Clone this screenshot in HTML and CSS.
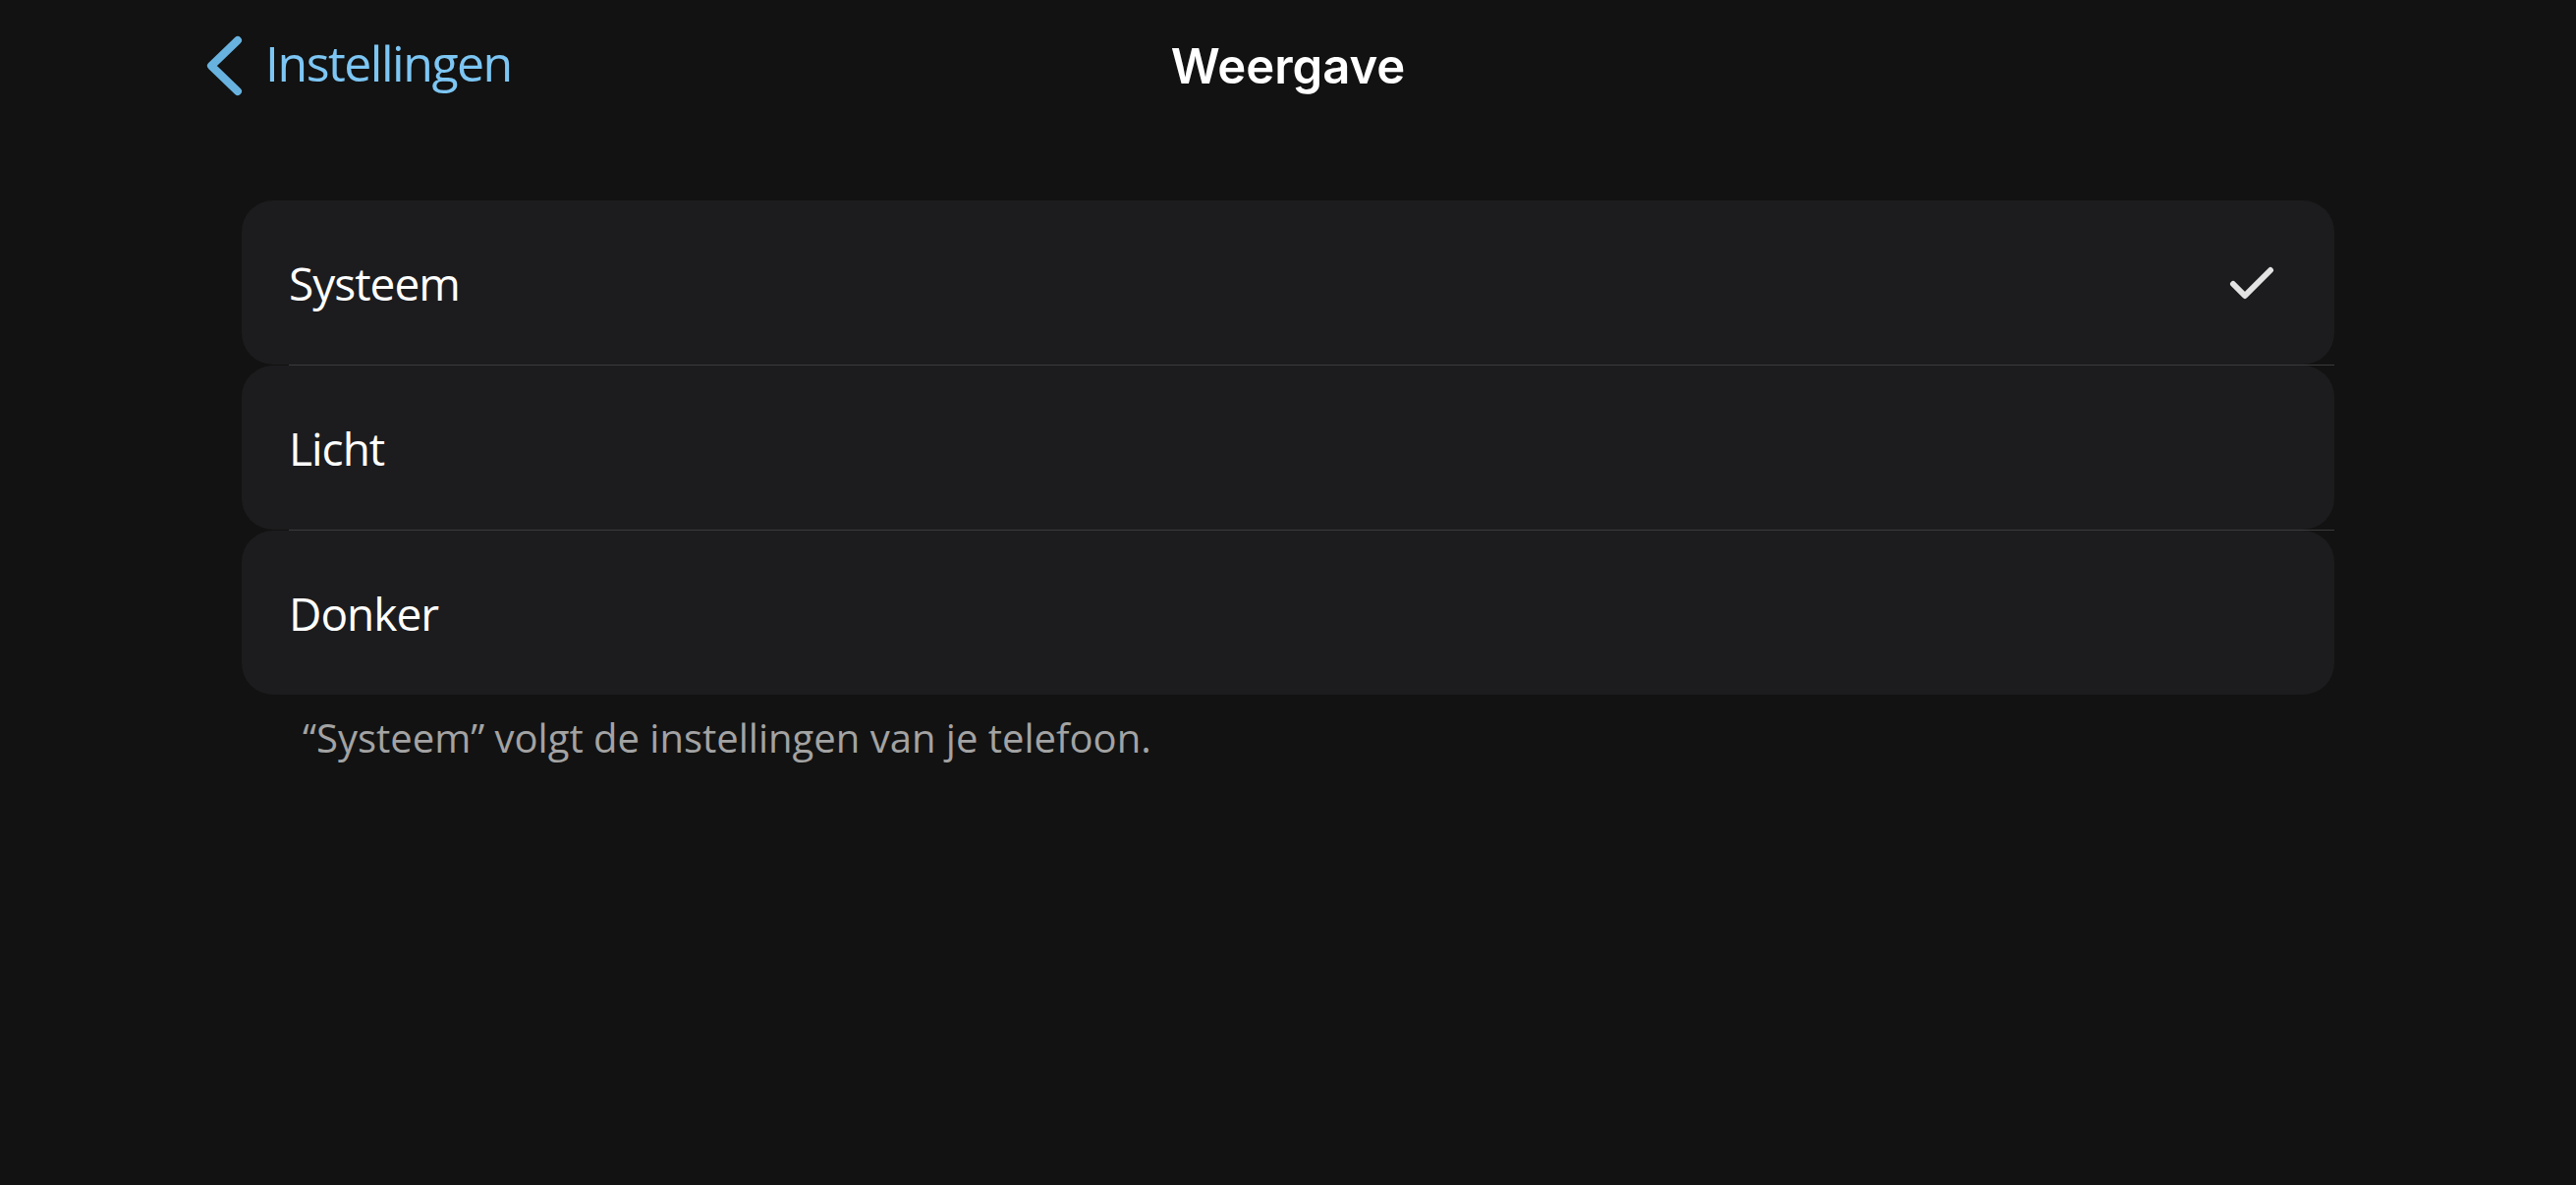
FILE: index.html
```html
<!DOCTYPE html>
<html lang="nl">
<head>
<meta charset="utf-8">
<title>Weergave</title>
<link rel="stylesheet" href="styles.css">
</head>
<body>
<header class="topbar">
  <a class="back" href="#">
    <svg class="back-icon" width="44" height="70" viewBox="0 0 44 70" aria-hidden="true">
      <path d="M37 9 L10 35 L37 61" fill="none" stroke="#68b2df" stroke-width="8" stroke-linecap="round" stroke-linejoin="round"/>
    </svg>
    <span class="back-label">Instellingen</span>
  </a>
  <h1 class="title">Weergave</h1>
  <div class="spacer"></div>
</header>
<main class="content">
  <ul class="options">
    <li class="option">
      <span class="option-label">Systeem</span>
      <svg class="check" width="52" height="40" viewBox="0 0 52 40" aria-hidden="true">
        <path d="M7 21 L19 33 L45 7" fill="none" stroke="#e3e3e3" stroke-width="6" stroke-linecap="round" stroke-linejoin="round"/>
      </svg>
    </li>
    <li class="sep"></li>
    <li class="option"><span class="option-label">Licht</span></li>
    <li class="sep"></li>
    <li class="option"><span class="option-label">Donker</span></li>
  </ul>
  <p class="note">“Systeem” volgt de instellingen van je telefoon.</p>
</main>
</body>
</html>
```
FILE: styles.css
```css
html, body {
  margin: 0;
  padding: 0;
  background: #121212;
  width: 2622px;
  height: 1206px;
  overflow: hidden;
  font-family: "Open Sans", "Noto Sans", sans-serif;
}

.topbar {
  height: 134px;
  display: grid;
  grid-template-columns: 1fr auto 1fr;
  align-items: center;
}

.back {
  display: flex;
  align-items: center;
  gap: 21px;
  padding-left: 205px;
  text-decoration: none;
}

.back-icon {
  display: block;
}

.back-label {
  color: #7dc6f4;
  font-size: 50px;
  line-height: 1;
  letter-spacing: -1.5px;
  position: relative;
  top: -3px;
}

.title {
  margin: 0;
  color: #ffffff;
  font-family: Inter, "Noto Sans", sans-serif;
  font-weight: 600;
  font-size: 49px;
  line-height: 1;
}

.content {
  padding: 70px 246px 0;
}

.options {
  list-style: none;
  margin: 0;
  padding: 0;
}

.option {
  height: 167px;
  box-sizing: border-box;
  background: #1c1c1e;
  border-radius: 32px;
  padding: 0 58px 0 48px;
  display: flex;
  align-items: center;
  justify-content: space-between;
}

.option-label {
  color: #ffffff;
  font-size: 46px;
  line-height: 1;
  letter-spacing: -1px;
}

.check {
  display: block;
}

.sep {
  height: 1px;
  margin-left: 48px;
  background: #3b3b3d;
}

.note {
  margin: 16px 0 0;
  padding-left: 62px;
  color: #a3a3a3;
  font-size: 40px;
  line-height: 56px;
}
```
